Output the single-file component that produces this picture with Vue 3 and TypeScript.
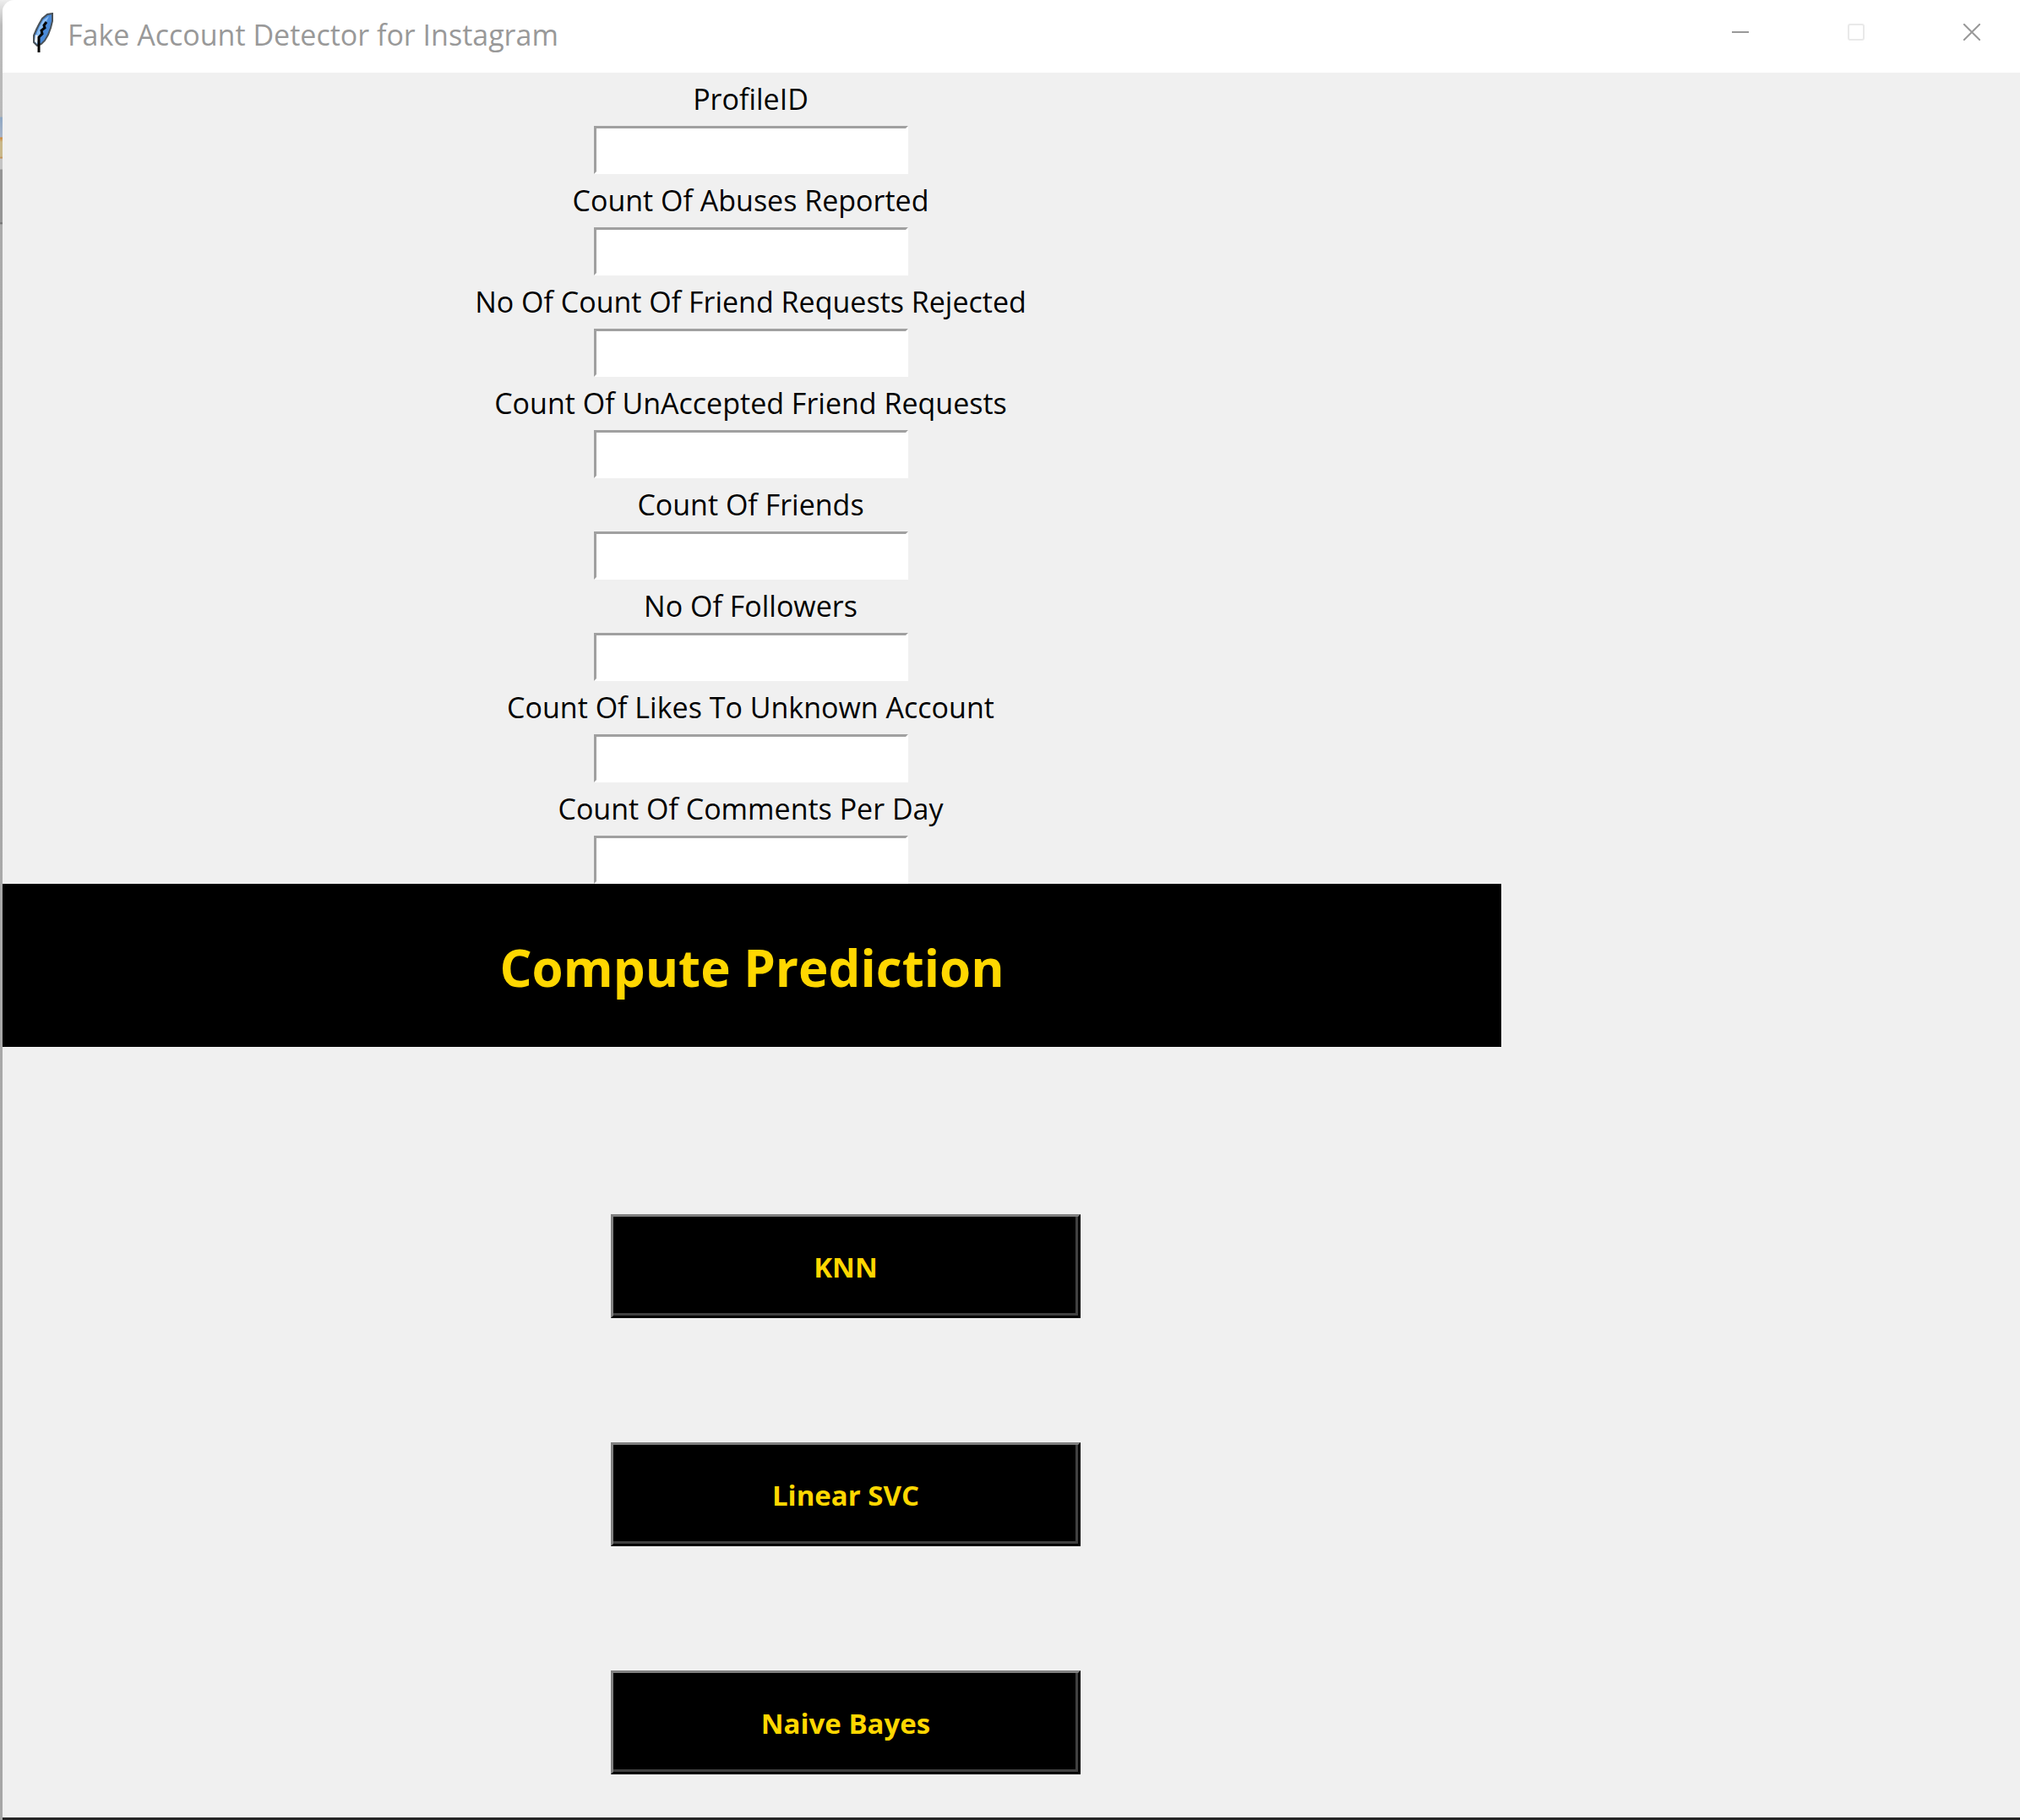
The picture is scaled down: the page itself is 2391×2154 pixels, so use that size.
<script setup lang="ts">
import { reactive } from 'vue'

interface Field {
  id: string
  label: string
}

const fields: Field[] = [
  { id: 'profile-id', label: 'ProfileID' },
  { id: 'abuses', label: 'Count Of Abuses Reported' },
  { id: 'rejected', label: 'No Of Count Of Friend Requests Rejected' },
  { id: 'unaccepted', label: 'Count Of UnAccepted Friend Requests' },
  { id: 'friends', label: 'Count Of Friends' },
  { id: 'followers', label: 'No Of Followers' },
  { id: 'likes', label: 'Count Of Likes To Unknown Account' },
  { id: 'comments', label: 'Count Of Comments Per Day' },
]

const models: string[] = ['KNN', 'Linear SVC', 'Naive Bayes']

const values = reactive<Record<string, string>>({})
</script>

<template>
  <div class="desktop">
    <main class="window">
      <header class="titlebar">
        <svg class="feather" viewBox="0 0 26 48" aria-hidden="true">
          <path d="M24 1 L18 2 L12 7 L8 14 L5 20 L2 27 L2 35 L6 39 L11 37 L15 33 L19 26 L22 18 L24 10 Z" fill="#4a8ad8" stroke="#4a5258" stroke-width="2" />
          <path d="M20 4 L13 9 L9 16 L6 23 L4 30 L4 34 L8 29 L11 20 L15 14 Z" fill="#8cbdf0" />
          <path d="M4 26 L3 34 L6 37 L8 28 Z" fill="#eef3f7" />
          <path d="M17 11 L14 15 L15 18 L11 21 L12 25 L8 29 L8 47" fill="none" stroke="#050505" stroke-width="3" />
        </svg>
        <h1 class="title">Fake Account Detector for Instagram</h1>
        <div class="controls">
          <button type="button" class="control" aria-label="Minimize">
            <svg viewBox="0 0 20 20"><path d="M0 10H20" stroke="#999" stroke-width="2" /></svg>
          </button>
          <button type="button" class="control" aria-label="Maximize" disabled>
            <svg viewBox="0 0 20 20"><rect x="1" y="1" width="18" height="18" rx="2" fill="none" stroke="#e9e9e9" stroke-width="2" /></svg>
          </button>
          <button type="button" class="control" aria-label="Close">
            <svg viewBox="0 0 20 20"><path d="M0 0L20 20M20 0L0 20" stroke="#999" stroke-width="2" /></svg>
          </button>
        </div>
      </header>

      <div class="body">
        <form class="form" @submit.prevent>
          <div v-for="field in fields" :key="field.id" class="field">
            <label :for="field.id">{{ field.label }}</label>
            <input :id="field.id" v-model="values[field.id]" type="text" />
          </div>
          <button type="submit" class="compute">Compute Prediction</button>
        </form>
      </div>

      <section class="models">
        <button v-for="model in models" :key="model" type="button" class="model">
          <span>{{ model }}</span>
        </button>
      </section>
    </main>
  </div>
</template>

<style>
body {
  margin: 0;
}
</style>

<style scoped>
* {
  box-sizing: border-box;
}

.desktop {
  min-height: 100vh;
  padding-left: 3px;
  display: flex;
  font-family: "Open Sans", "Noto Sans", sans-serif;
  background: linear-gradient(
    #eee 0, #bbb 30px, #b8b8b8 138px, #8fa8c4 139px, #a8b4c8 162px,
    #d08a3c 163px, #c9b88a 168px, #c9b88a 185px, #c08a50 187px,
    #c4c4c4 188px, #c4c4c4 200px, #959595 201px, #959595 263px,
    #666 264px, #aaa 266px, #a6a6a6 100%
  );
}

.window {
  flex: 1;
  display: flex;
  flex-direction: column;
  background: #f0f0f0;
  border-bottom: 3px solid #262626;
  border-top-left-radius: 14px;
  overflow: hidden;
}

.titlebar {
  height: 86px;
  display: flex;
  align-items: flex-start;
  background: #fff;
}

.feather {
  width: 26px;
  height: 48px;
  margin: 15px 0 0 35px;
}

.title {
  flex: 1;
  margin: 16px 0 0 16px;
  font-size: 34px;
  line-height: 50px;
  font-weight: 400;
  color: #999;
}

.controls {
  display: flex;
  gap: 23px;
}

.control {
  width: 114px;
  height: 76px;
  padding: 0;
  display: flex;
  align-items: center;
  justify-content: center;
  border: 0;
  background: none;
}

.control svg {
  width: 20px;
  height: 20px;
}

.body {
  display: grid;
  grid-template-columns: 1774fr 614fr;
}

.form {
  display: flex;
  flex-direction: column;
}

.field {
  display: flex;
  flex-direction: column;
  align-items: center;
  padding-right: 3px;
}

.field label {
  font-size: 34px;
  line-height: 63px;
  color: #000;
}

.field input {
  width: 372px;
  height: 57px;
  padding: 0 6px;
  border: 3px solid #fff;
  border-top-color: #a0a0a0;
  border-left-color: #a0a0a0;
  border-radius: 0;
  outline: 0;
  background: #fff;
  font: inherit;
  font-size: 34px;
}

.compute {
  height: 193px;
  padding: 4px 0 0;
  border: 0;
  background: #000;
  color: gold;
  font-family: inherit;
  font-size: 60px;
  line-height: 80px;
  font-weight: 700;
}

.models {
  display: flex;
  flex-direction: column;
  align-items: flex-start;
  gap: 147px;
  padding: 198px 0 51px 720px;
}

.model {
  width: 556px;
  height: 123px;
  padding: 2px 0 0;
  border: 3px solid #000;
  border-top-color: #808080;
  border-left-color: #808080;
  background: #000;
  box-shadow: inset -3px -3px 0 #404040;
  color: gold;
  font-family: inherit;
  font-size: 33px;
  line-height: 44px;
  font-weight: 700;
}
</style>
